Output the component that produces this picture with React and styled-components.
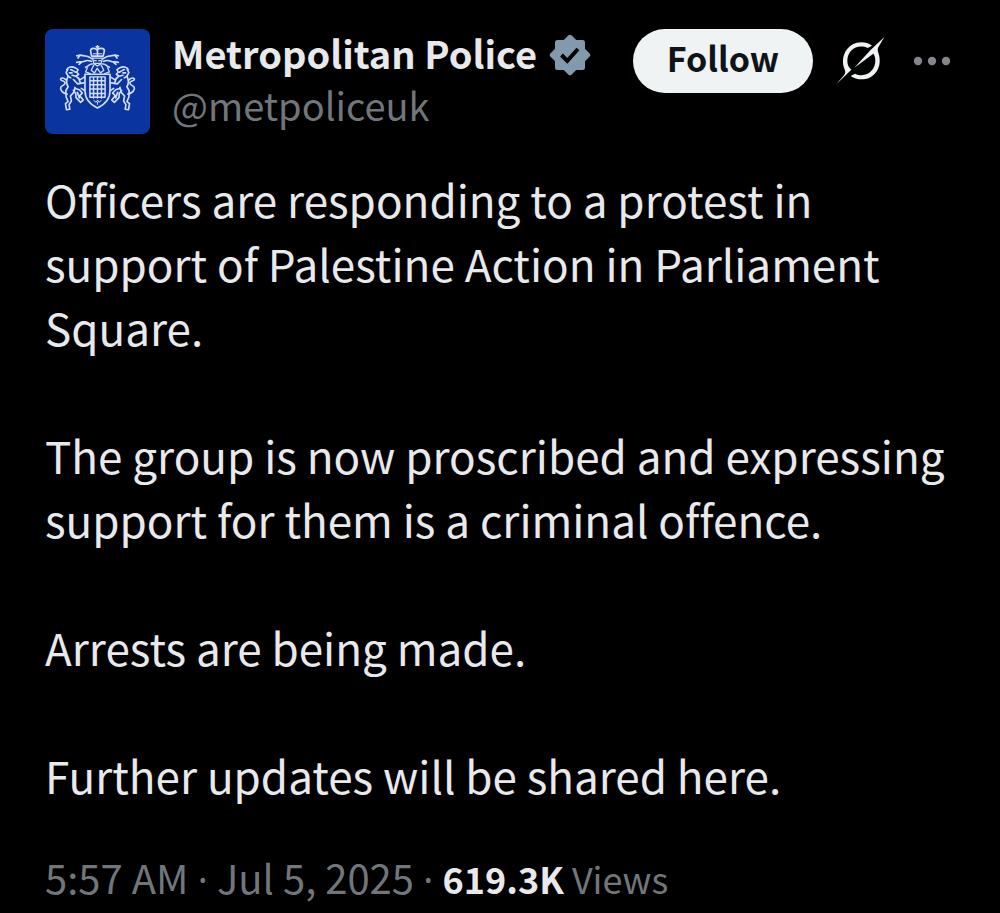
import React from "react";
import styled, { createGlobalStyle } from "styled-components";

const GlobalStyle = createGlobalStyle`
  * { box-sizing: border-box; }
  body {
    margin: 0;
    background: #000;
    color: #e7e9ea;
    font-family: "Noto Sans CJK SC", "Noto Sans", sans-serif;
    font-variant-ligatures: none;
  }
`;

const Post = styled.article`
  padding: 29px 49px 0 45px;
`;

const Header = styled.header`
  display: flex;
  align-items: flex-start;
`;

const Avatar = styled.svg`
  flex: none;
  width: 105px;
  height: 105px;
  border-radius: 8px;
  background: #0a35a0;
`;

const Identity = styled.div`
  flex: 1;
  min-width: 0;
  padding-left: 22px;
`;

const NameRow = styled.div`
  display: flex;
  align-items: flex-start;
  gap: 12px;
  height: 52px;
`;

const Name = styled.h1`
  margin: 0;
  font-size: 38px;
  line-height: 48px;
  font-weight: 700;
  white-space: nowrap;
`;

const Badge = styled.svg`
  flex: none;
  align-self: center;
  width: 42px;
  height: 42px;
`;

const Handle = styled.a`
  display: block;
  color: #71767b;
  font-size: 38px;
  line-height: 48px;
  text-decoration: none;
`;

const Actions = styled.div`
  display: flex;
  align-items: center;
  height: 64px;
`;

const FollowButton = styled.button`
  width: 180px;
  height: 64px;
  padding: 0 0 6px;
  border: 0;
  border-radius: 32px;
  background: #eff3f4;
  color: #0f1419;
  font-family: inherit;
  font-size: 34px;
  line-height: 58px;
  font-weight: 700;
`;

const IconButton = styled.button`
  display: flex;
  margin-left: ${(p) => p.$gap}px;
  padding: 0;
  border: 0;
  background: none;
  color: ${(p) => p.$color};
`;

const Body = styled.div`
  display: flex;
  flex-direction: column;
  gap: 64px;
  margin-top: 33px;
`;

const Paragraph = styled.p`
  margin: 0;
  font-size: 44px;
  line-height: 64px;
`;

const Meta = styled.footer`
  margin-top: 42px;
  color: #71767b;
  font-size: 40px;
  line-height: 56px;
  white-space: nowrap;
`;

const Dot = styled.span`
  font-family: "Open Sans", sans-serif;
  line-height: 1;
`;

const Views = styled.a`
  color: inherit;
  font-size: 36px;
  text-decoration: none;
`;

const Count = styled.strong`
  color: #e7e9ea;
  font-weight: 700;
`;

const Supporter = () => (
  <g>
    <path d="M92 150 C96 141 108 140 117 144 L126 150 L122 158 L128 164 L120 170 L108 167 M95 149 L90 159 L96 170 L104 175" />
    <path d="M104 150 L110 153 M114 155 L119 158 M100 160 L108 160" />
    <path d="M96 170 C90 182 91 194 96 202 L89 214 L90 233 L96 247 L88 253 L91 271 L101 270 L99 256 L106 245 L103 230 L113 219 L117 204" />
    <path d="M120 170 L132 181 L146 172 M112 180 L125 193 L143 190 M128 176 L133 190" />
    <path d="M93 224 C80 222 70 211 74 203 C78 197 88 197 87 190 C86 182 74 187 73 179 C74 174 84 174 89 181" />
    <path d="M117 207 L130 211 L139 221 L131 229 L142 242 L134 249 L120 235 L119 222 L112 213 M124 219 L130 236 M136 207 L145 213" />
  </g>
);

const Crest = () => (
  <Avatar viewBox="26 27 318 318" role="img" aria-label="Metropolitan Police crest">
    <g fill="none" stroke="#d3def8" strokeWidth="5" strokeLinejoin="round" strokeLinecap="round">
      <Supporter />
      <g transform="translate(370 0) scale(-1 1)">
        <Supporter />
      </g>
      <path d="M167 109 L164 93 C164 84 178 83 184 91 C190 83 206 84 206 93 L202 109 Z M185 89 V108 M185 78 V86 M181 81 H189" />
      <path d="M172 102 H198" strokeWidth="3" />
      <path d="M170 115 H200 L196 132 L185 139 L174 132 Z M176 123 H181 M189 123 H194 M178 131 H192" strokeWidth="4" />
      <path d="M168 117 C151 104 139 110 132 106 L122 108 M166 125 C148 116 145 130 132 126 L122 128 M169 133 C160 132 157 141 149 143 M132 106 L126 115 M136 128 L129 134" />
      <path d="M202 117 C219 104 231 110 238 106 L248 108 M204 125 C222 116 225 130 238 126 L248 128 M201 133 C210 132 213 141 221 143 M238 106 L244 115 M234 128 L241 134" />
      <path d="M174 136 L166 152 L176 160 L184 146 L194 160 L204 152 L196 136 M154 145 L149 157 L163 162 M216 145 L221 157 L207 162" strokeWidth="4" />
      <path d="M147 164 H223 V213 C223 239 206 256 185 266 C164 256 147 239 147 213 Z" />
      <path d="M162 172 H208 V234 H162 Z M173 172 V236 M185 172 V236 M197 172 V236 M162 184 H208 M162 196 H208 M162 209 H208 M162 222 H208" strokeWidth="4.5" />
      <path d="M174 244 L181 249 L185 242 L189 249 L196 244 M185 249 V255" strokeWidth="3" />
    </g>
  </Avatar>
);

const VerifiedBadge = () => (
  <Badge viewBox="0 0 42 42" role="img" aria-label="Verified account">
    <g fill="#829aab">
      <rect x="6" y="6" width="30" height="30" rx="2.5" />
      <rect x="6" y="6" width="30" height="30" rx="2.5" transform="rotate(45 21 21)" />
    </g>
    <path d="M12.5 21 L18.3 26.8 L29 15" fill="none" stroke="#000" strokeWidth="4" />
  </Badge>
);

const GrokIcon = () => (
  <svg width="50" height="50" viewBox="48 48 150 150" fill="currentColor" aria-hidden="true">
    <path d="M49 193 L73 164 C79 156 74 149 71 140 C62 103 86 67 124 67 C136 67 146 70 156 77 L143 84 C112 70 82 91 82 122 C82 133 85 141 94 149 Z" />
    <path d="M193 51 L175 82 C170 91 177 100 178 110 C185 148 159 178 125 178 C112 178 102 175 92 168 L105 161 C136 176 167 153 166 121 C166 113 164 107 160 101 L103 143 L151 91 Z" />
  </svg>
);

const MoreIcon = () => (
  <svg width="38" height="12" viewBox="0 0 38 12" fill="currentColor" aria-hidden="true">
    <circle cx="5" cy="6" r="4.2" />
    <circle cx="19" cy="6" r="4.2" />
    <circle cx="33" cy="6" r="4.2" />
  </svg>
);

const paragraphs = [
  "Officers are responding to a protest in support of Palestine Action in Parliament Square.",
  "The group is now proscribed and expressing support for them is a criminal offence.",
  "Arrests are being made.",
  "Further updates will be shared here.",
];

export default function App() {
  return (
    <Post>
      <GlobalStyle />
      <Header>
        <Crest />
        <Identity>
          <NameRow>
            <Name>Metropolitan Police</Name>
            <VerifiedBadge />
          </NameRow>
          <Handle href="#profile">@metpoliceuk</Handle>
        </Identity>
        <Actions>
          <FollowButton type="button">Follow</FollowButton>
          <IconButton type="button" aria-label="Grok" $gap={23} $color="#eff3f4">
            <GrokIcon />
          </IconButton>
          <IconButton type="button" aria-label="More" $gap={27} $color="#85868b">
            <MoreIcon />
          </IconButton>
        </Actions>
      </Header>
      <Body>
        {paragraphs.map((text) => (
          <Paragraph key={text}>{text}</Paragraph>
        ))}
      </Body>
      <Meta>
        <time dateTime="2025-07-05T05:57">
          5:57 AM <Dot>·</Dot> Jul 5, 2025
        </time>{" "}
        <Dot>·</Dot>{" "}
        <Views href="#views">
          <Count>619.3K</Count> Views
        </Views>
      </Meta>
    </Post>
  );
}
